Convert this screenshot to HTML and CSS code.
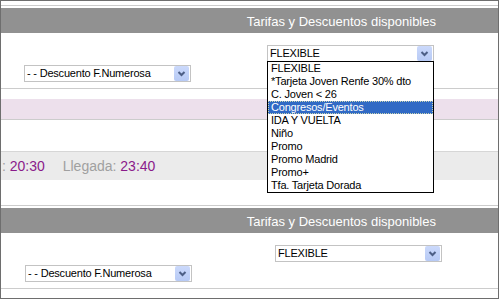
FILE: index.html
```html
<!DOCTYPE html>
<html lang="es">
<head>
    <meta charset="UTF-8">
    <title>Tarifas y Descuentos</title>
    <link rel="stylesheet" href="styles.css">
</head>
<body>
    <div class="frame">
        <div class="section first">
            <div class="rule"></div>
            <div class="title">Tarifas y Descuentos disponibles</div>
            <div class="fares">
                <div class="combo fare-a open">
                    <span class="combo-text">FLEXIBLE</span>
                    <span class="combo-btn"><svg width="15" height="15" viewBox="0 0 15 15"><path d="M4.5 6 L7.5 9 L10.5 6" fill="none" stroke="#4d5f86" stroke-width="2"/></svg></span>
                    <ul class="combo-list">
                        <li>FLEXIBLE</li>
                        <li>*Tarjeta Joven Renfe 30% dto</li>
                        <li>C. Joven &lt; 26</li>
                        <li class="selected">Congresos/Eventos</li>
                        <li>IDA Y VUELTA</li>
                        <li>Niño</li>
                        <li>Promo</li>
                        <li>Promo Madrid</li>
                        <li>Promo+</li>
                        <li>Tfa. Tarjeta Dorada</li>
                    </ul>
                </div>
                <div class="combo disc-a">
                    <span class="combo-text">- - Descuento F.Numerosa</span>
                    <span class="combo-btn"><svg width="15" height="15" viewBox="0 0 15 15"><path d="M4.5 6 L7.5 9 L10.5 6" fill="none" stroke="#4d5f86" stroke-width="2"/></svg></span>
                </div>
            </div>
        </div>

        <div class="band"></div>

        <div class="times">
            <span class="label">:</span> <span class="hour">20:30</span>
            <span class="label arrive">Llegada:</span> <span class="hour">23:40</span>
        </div>

        <div class="section">
            <div class="rule"></div>
            <div class="title">Tarifas y Descuentos disponibles</div>
            <div class="fares">
                <div class="combo fare-b">
                    <span class="combo-text">FLEXIBLE</span>
                    <span class="combo-btn"><svg width="15" height="15" viewBox="0 0 15 15"><path d="M4.5 6 L7.5 9 L10.5 6" fill="none" stroke="#4d5f86" stroke-width="2"/></svg></span>
                </div>
                <div class="combo disc-b">
                    <span class="combo-text">- - Descuento F.Numerosa</span>
                    <span class="combo-btn"><svg width="15" height="15" viewBox="0 0 15 15"><path d="M4.5 6 L7.5 9 L10.5 6" fill="none" stroke="#4d5f86" stroke-width="2"/></svg></span>
                </div>
            </div>
        </div>
    </div>
</body>
</html>
```

FILE: styles.css
```css
body{
    margin: 0;
    font-family: "Liberation Sans", Arial, sans-serif;
    background-color: #ffffff;
}
.frame{
    width: 499px;
    height: 299px;
    box-sizing: border-box;
    border: 1px solid #6e6e6e;
    background-color: #ffffff;
    overflow: hidden;
}
.section{
    padding-top: 4px;
}
.section.first{
    padding-top: 4px;
}
.rule{
    height: 1px;
    background-color: #cccccc;
    margin-bottom: 2px;
}
.title{
    height: 25px;
    box-sizing: border-box;
    padding: 2px 62px 0 0;
    line-height: 23px;
    font-size: 13px;
    color: #ffffff;
    text-align: right;
    background-color: #919191;
}
.fares{
    height: 56px;
    box-sizing: border-box;
    padding-top: 12px;
    border-bottom: 1px solid #cccccc;
    display: flex;
    flex-direction: column;
    gap: 3px;
}
.combo{
    position: relative;
    width: 167px;
    height: 17px;
    box-sizing: border-box;
    border: 1px solid #c3c3c3;
    background-color: #ffffff;
    display: flex;
    align-items: center;
}
.fare-a{ margin-left: 266px; }
.disc-a{ margin-left: 23px; }
.fare-b{ margin-left: 274px; }
.disc-b{ margin-left: 24px; }
.combo-text{
    flex: 1;
    padding-left: 2px;
    font-size: 11px;
    line-height: 15px;
    letter-spacing: -0.2px;
    color: #000000;
    white-space: nowrap;
}
.combo-btn{
    width: 15px;
    height: 15px;
    margin-right: 1px;
    box-sizing: border-box;
    border-radius: 2px;
    background: linear-gradient(#cbd9fb, #b7caf5);
    display: flex;
}
.combo-btn svg{
    display: block;
}
.combo-list{
    position: absolute;
    left: -1px;
    top: 15px;
    width: 167px;
    margin: 0;
    padding: 0;
    list-style: none;
    box-sizing: border-box;
    border: 1px solid #000000;
    background-color: #ffffff;
    z-index: 2;
}
.combo-list li{
    height: 13px;
    padding-left: 3px;
    font-size: 11px;
    line-height: 13px;
    letter-spacing: -0.2px;
    color: #000000;
    white-space: nowrap;
}
.combo-list li.selected{
    background-color: #316ac5;
    color: #ffffff;
    outline: 1px dotted #c8d4b0;
    outline-offset: -1px;
}
.band{
    height: 20px;
    margin-top: 10px;
    background-color: #ede0ec;
    border-bottom: 1px solid #cccccc;
}
.times{
    height: 28px;
    margin-top: 31px;
    margin-bottom: 25px;
    padding-left: 1px;
    border-top: 1px solid #d6d6d6;
    background-color: #ebebeb;
    font-size: 14px;
    line-height: 28px;
    white-space: nowrap;
}
.times .label{
    color: #a0a0a0;
}
.times .hour{
    color: #8a1a8a;
}
.times .arrive{
    margin-left: 14px;
}
.section + .section,
.times + .section{
    padding-top: 0;
}
```
